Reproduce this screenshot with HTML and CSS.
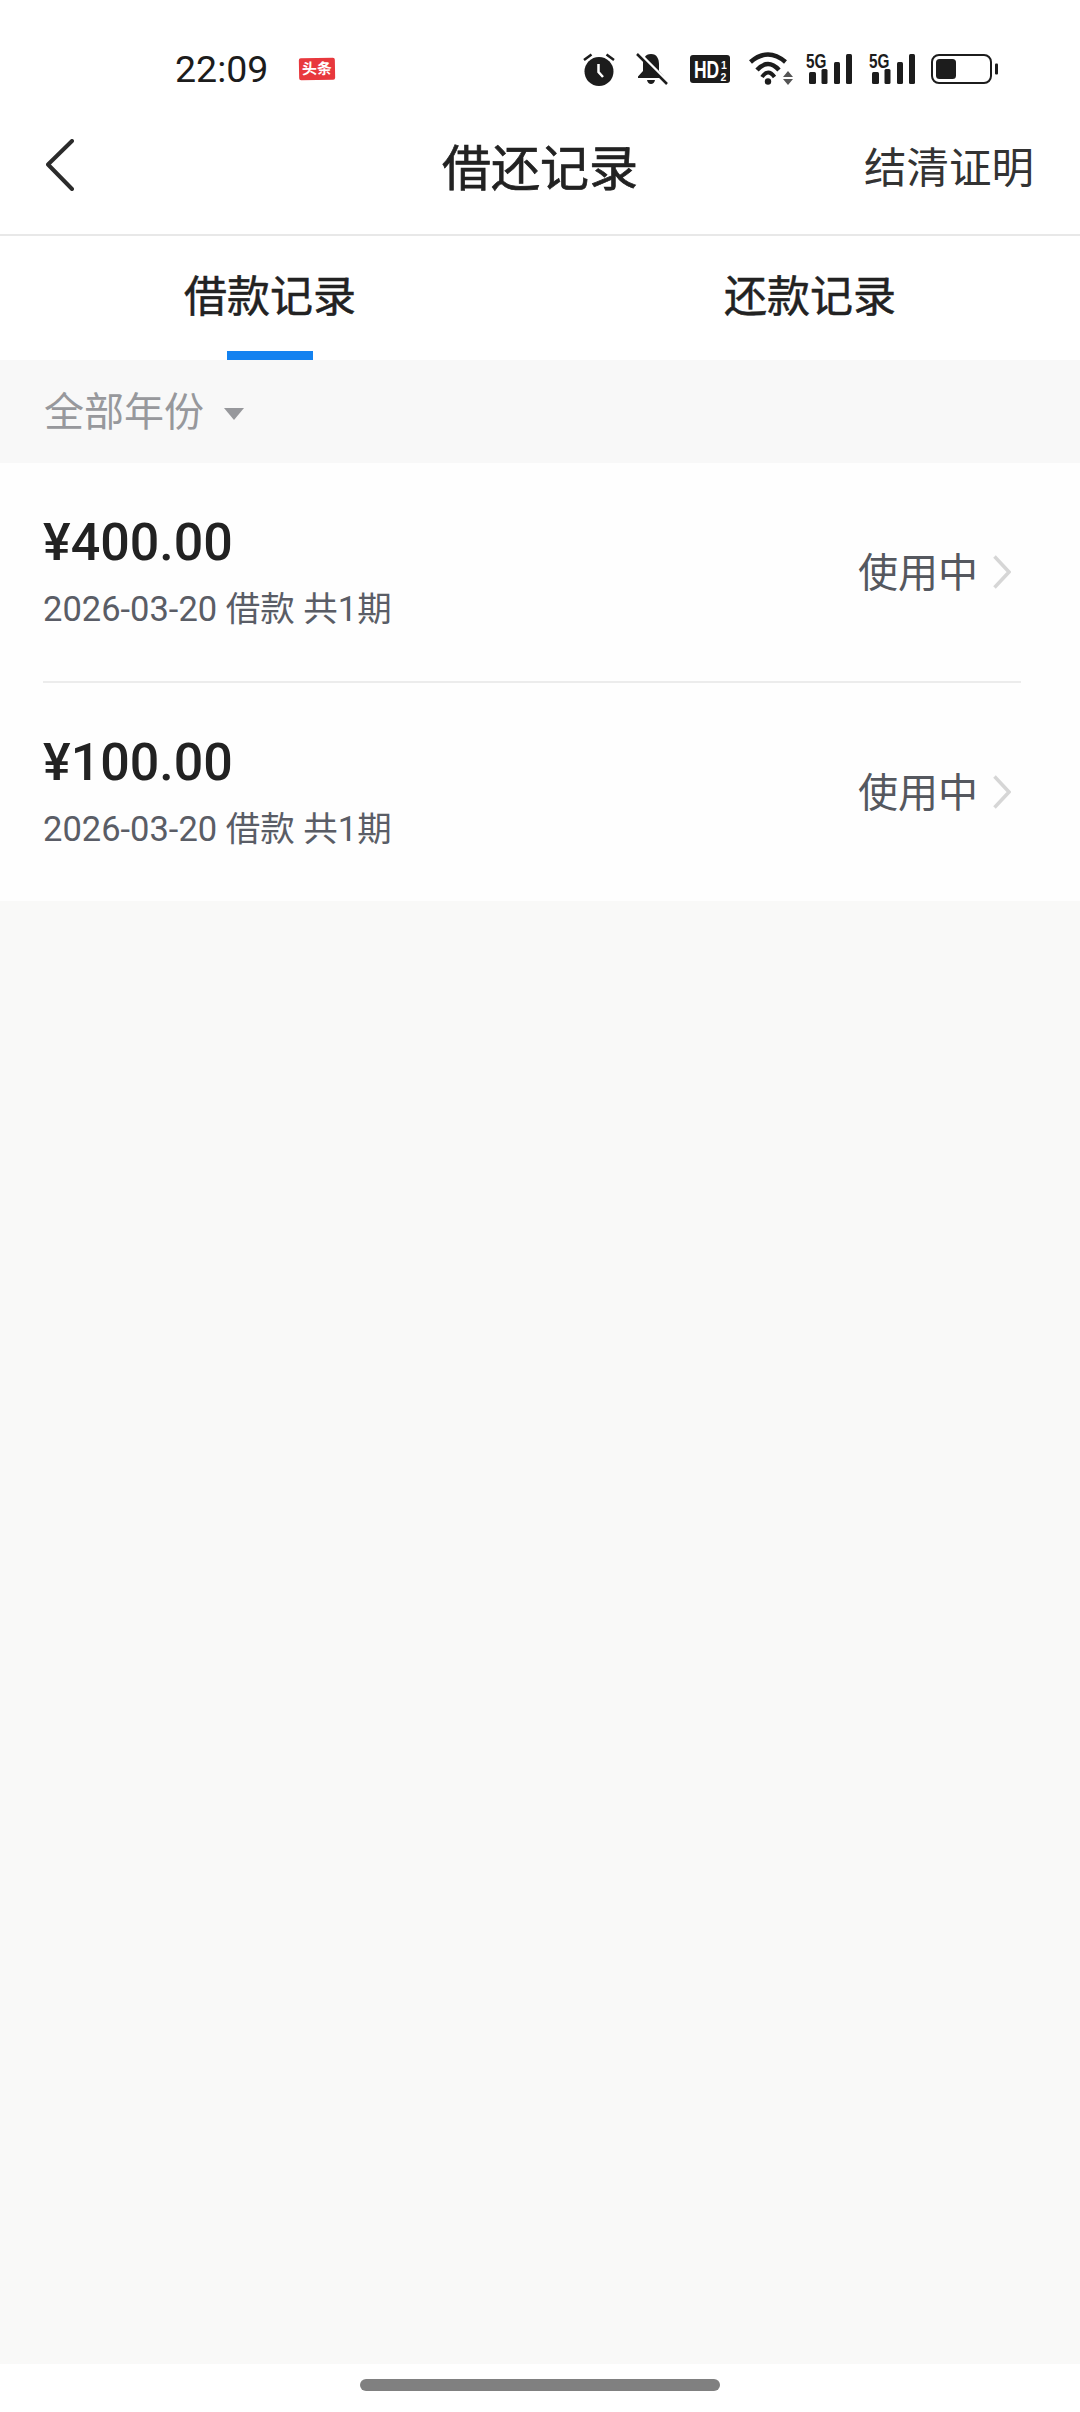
FILE: index.html
```html
<!DOCTYPE html>
<html lang="zh-CN">

<head>
    <meta charset="UTF-8">
    <meta name="viewport" content="width=device-width, initial-scale=1.0">
    <title>借还记录</title>
    <link rel="stylesheet" href="styles.css">
</head>

<body>
    <div class="page">
        <div class="status">
            <span class="time">22:09</span>
            <span class="news">头条</span>
            <div class="status-icons">
                <svg class="ic-alarm" width="33" height="34" viewBox="0 0 33 34">
                    <circle cx="16" cy="19.500" r="14.500" fill="#1c1c1c"/>
                    <path d="M1 8 8.500 2.500M31 8 23.500 2.500" stroke="#1c1c1c" stroke-width="2.500" fill="none"/>
                    <path d="M15.500 12V20L20 25" stroke="#fff" stroke-width="2.500" fill="none"/>
                </svg>
                <svg class="ic-bell" width="32" height="33" viewBox="0 0 32 33">
                    <path d="M15 1C9 1 7 6 7 11V18L2 23.500V25H28V23.500L23 18V11C23 6 21 1 15 1Z" fill="#1c1c1c"/>
                    <path d="M11 27H19C18.500 29.500 17 31 15 31S11.500 29.500 11 27Z" fill="#1c1c1c"/>
                    <path d="M3 0 33 30" stroke="#fff" stroke-width="3"/>
                    <path d="M1 1 31 31" stroke="#1c1c1c" stroke-width="2.500"/>
                </svg>
                <svg class="ic-hd" width="40" height="28" viewBox="0 0 40 28">
                    <rect width="40" height="28" rx="3" fill="#1c1c1c"/>
                    <text class="hd-text" transform="translate(4 22.500) scale(.76 1)" font-size="23">HD</text>
                    <text class="hd-text" x="31" y="13.500" font-size="10.500">1</text>
                    <text class="hd-text" x="30.500" y="25.500" font-size="10.500">2</text>
                </svg>
                <svg class="ic-wifi" width="46" height="34" viewBox="0 0 46 34">
                    <path d="M2.500 10Q20 -5 37.500 10" stroke="#1c1c1c" stroke-width="4.500" fill="none"/>
                    <path d="M9 18Q20 6 31 18" stroke="#1c1c1c" stroke-width="4.500" fill="none"/>
                    <path d="M14 25Q20 16 26.500 25" stroke="#1c1c1c" stroke-width="4" fill="none"/>
                    <circle cx="20" cy="29.500" r="3.200" fill="#1c1c1c"/>
                    <path d="M35 25 40 19 45 25ZM35 27H45L40 33Z" fill="#555"/>
                </svg>
                <div class="signal">
                    <svg width="46" height="36" viewBox="0 -4 46 36">
                        <text class="g-text" transform="translate(0 15.500) scale(.73 1)" font-size="21">5G</text>
                        <rect x="3" y="20" width="7" height="12" rx="1.500" fill="#1c1c1c"/>
                        <rect x="15.500" y="17" width="6" height="15" rx="1.500" fill="#1c1c1c"/>
                        <rect x="28" y="10" width="6" height="22" rx="1.500" fill="#1c1c1c"/>
                        <rect x="40" y="2" width="6" height="30" rx="1.500" fill="#1c1c1c"/>
                    </svg>
                </div>
                <div class="signal">
                    <svg width="46" height="36" viewBox="0 -4 46 36">
                        <text class="g-text" transform="translate(0 15.500) scale(.73 1)" font-size="21">5G</text>
                        <rect x="3" y="20" width="7" height="12" rx="1.500" fill="#1c1c1c"/>
                        <rect x="15.500" y="17" width="6" height="15" rx="1.500" fill="#1c1c1c"/>
                        <rect x="28" y="10" width="6" height="22" rx="1.500" fill="#1c1c1c"/>
                        <rect x="40" y="2" width="6" height="30" rx="1.500" fill="#1c1c1c"/>
                    </svg>
                </div>
                <svg class="ic-battery" width="67" height="30" viewBox="0 0 67 30">
                    <rect x="1" y="1" width="59" height="28" rx="7" fill="none" stroke="#1c1c1c" stroke-width="2"/>
                    <rect x="5" y="5" width="20" height="20" rx="3.500" fill="#1c1c1c"/>
                    <rect x="64" y="9.500" width="3" height="11" rx="1" fill="#1c1c1c"/>
                </svg>
            </div>
        </div>

        <div class="nav">
            <svg class="back" width="28" height="52" viewBox="0 0 28 52">
                <path d="M26 2 2 25.500 26 50" stroke="#2b2b2b" stroke-width="4" fill="none" stroke-linecap="round" stroke-linejoin="round"/>
            </svg>
            <div class="nav-title">借还记录</div>
            <div class="nav-right">结清证明</div>
        </div>

        <div class="tabs">
            <div class="tab active">借款记录</div>
            <div class="tab">还款记录</div>
        </div>

        <div class="filter">
            <span>全部年份</span>
            <i class="caret"></i>
        </div>

        <div class="list">
            <div class="row">
                <div class="row-left">
                    <div class="amount">¥400.00</div>
                    <div class="info">2026-03-20 借款 共1期</div>
                </div>
                <div class="row-state">使用中</div>
                <svg class="arrow" width="18" height="34" viewBox="0 0 18 34">
                    <path d="M1.500 1.500 16 17 1.500 32.500" stroke="#d6d6d6" stroke-width="3.500" fill="none"/>
                </svg>
            </div>
            <div class="row">
                <div class="row-left">
                    <div class="amount">¥100.00</div>
                    <div class="info">2026-03-20 借款 共1期</div>
                </div>
                <div class="row-state">使用中</div>
                <svg class="arrow" width="18" height="34" viewBox="0 0 18 34">
                    <path d="M1.500 1.500 16 17 1.500 32.500" stroke="#d6d6d6" stroke-width="3.500" fill="none"/>
                </svg>
            </div>
        </div>

        <div class="blank"></div>

        <div class="home">
            <div class="home-bar"></div>
        </div>
    </div>
</body>

</html>
```

FILE: styles.css
```css
* {
    margin: 0;
    padding: 0;
    box-sizing: border-box;
}

body {
    width: 1080px;
    height: 2412px;
    overflow: hidden;
    background-color: #f9f9f8;
    font-family: Roboto, "Noto Sans CJK SC", sans-serif;
    color: #222;
}

.page {
    display: flex;
    flex-direction: column;
    height: 2412px;
}

/* status bar */
.status {
    display: flex;
    align-items: center;
    height: 102px;
    padding: 36px 0 0 175px;
    background-color: #fff;
}

.time {
    width: 124px;
    font-size: 37.500px;
    color: #1c1c1c;
}

.news {
    display: block;
    width: 36px;
    height: 22px;
    line-height: 22px;
    font-size: 15px;
    font-weight: 700;
    text-align: center;
    color: #fff;
    background-color: #e8383d;
    border-radius: 2px;
    transform: rotate(-1deg);
}

.status-icons {
    display: flex;
    align-items: center;
    margin-left: 248px;
}

.ic-bell {
    margin-left: 20px;
}

.ic-hd {
    margin-left: 22px;
}

.ic-wifi {
    margin-left: 18px;
}

.signal {
    display: flex;
    margin: 0 0 6px 12px;
}

.signal + .signal {
    margin-left: 17px;
}

.ic-battery {
    margin-left: 16px;
}

.hd-text,
.g-text {
    font-family: "Liberation Sans", sans-serif;
    font-weight: 700;
}

.hd-text {
    fill: #fff;
}

.g-text {
    fill: #1c1c1c;
}

/* title bar */
.nav {
    display: grid;
    grid-template-columns: 1fr auto 1fr;
    align-items: center;
    height: 134px;
    padding: 0 46px 7px 46px;
    background-color: #fff;
    border-bottom: 2px solid #e8e8e8;
}

.nav-title {
    font-size: 49px;
    color: #222;
    -webkit-text-stroke: 0.7px #222;
}

.nav-right {
    font-size: 42.500px;
    text-align: right;
    color: #333;
}

/* tabs */
.tabs {
    display: flex;
    height: 124px;
    background-color: #fff;
}

.tab {
    flex: 1;
    position: relative;
    display: flex;
    align-items: center;
    justify-content: center;
    padding-bottom: 10px;
    font-size: 43px;
    color: #222;
    -webkit-text-stroke: 0.5px #222;
}

.tab.active::after {
    content: "";
    position: absolute;
    left: 227px;
    bottom: 0;
    width: 86px;
    height: 9px;
    background-color: #1482f0;
}

/* year filter */
.filter {
    display: flex;
    align-items: center;
    height: 103px;
    padding: 0 0 6px 44px;
    font-size: 40px;
    color: #97989c;
    background-color: #f8f8f8;
}

.caret {
    display: block;
    width: 0;
    height: 0;
    margin: 10px 0 0 20px;
    border-left: 10px solid transparent;
    border-right: 10px solid transparent;
    border-top: 12px solid #97989c;
}

/* list */
.list {
    padding-left: 43px;
    background-color: #fefefe;
}

.row {
    display: flex;
    align-items: center;
    height: 220px;
    width: 978px;
    padding-right: 10px;
    border-bottom: 2px solid #ececec;
}

.row:last-child {
    height: 218px;
    border-bottom: none;
}

.row-left {
    flex: 1;
}

.amount {
    font-size: 52px;
    line-height: 62px;
    font-weight: 500;
    color: #222;
}

.info {
    margin-top: 11px;
    font-size: 34.500px;
    line-height: 48px;
    color: #5a5d66;
}

.row-state {
    margin-bottom: 5px;
    font-size: 40px;
    color: #55585f;
}

.arrow {
    margin-left: 15px;
}

.blank {
    flex: 1;
}

/* bottom gesture bar */
.home {
    display: flex;
    justify-content: center;
    height: 48px;
    padding-top: 15px;
    background-color: #fff;
}

.home-bar {
    width: 360px;
    height: 12px;
    background-color: #808080;
    border-radius: 6px;
}
```
